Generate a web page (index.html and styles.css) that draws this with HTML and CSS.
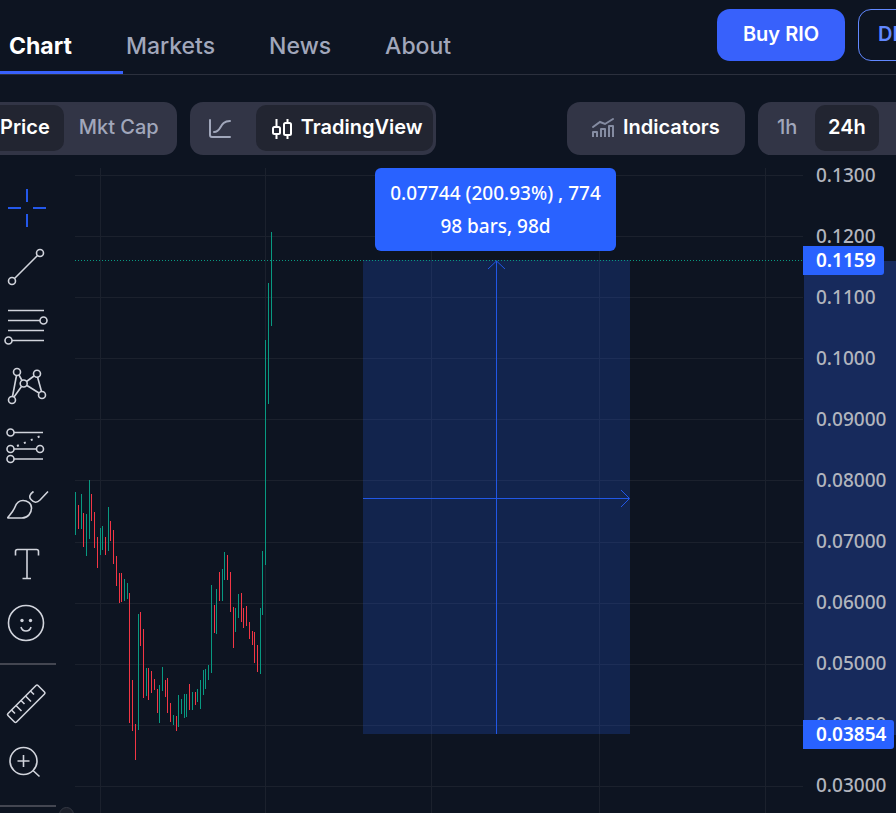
FILE: index.html
```html
<!DOCTYPE html>
<html lang="en">
  <head>
    <meta charset="UTF-8" />
    <meta name="viewport" content="width=device-width, initial-scale=1.0" />
    <title>RIO Price Chart</title>
    <link rel="stylesheet" href="styles.css">
  </head>
  <body>
    <header class="header">
      <nav class="tabs">
        <a class="tab active" href="#chart">Chart</a>
        <a class="tab" href="#markets">Markets</a>
        <a class="tab" href="#news">News</a>
        <a class="tab" href="#about">About</a>
      </nav>
      <div class="actions">
        <button class="btn btn-primary">Buy RIO</button>
        <button class="btn btn-outline">DEX</button>
      </div>
    </header>

    <!-- Chart options -->
    <div class="options">
      <div class="group group-start">
        <button class="option active">Price</button>
        <button class="option">Mkt Cap</button>
      </div>
      <div class="group group-view">
        <button class="option option-icon" aria-label="Line chart">
          <svg width="24" height="22" viewBox="0 0 24 22" fill="none" stroke="currentColor" stroke-width="2" stroke-linecap="round" stroke-linejoin="round">
            <path d="M2 2V17Q2 19 4 19H22M6 14C14 14 11 3 22 3" />
          </svg>
        </button>
        <button class="option option-view active">
          <svg width="22" height="22" viewBox="0 0 22 22" fill="none" stroke="currentColor" stroke-width="2">
            <rect x="2" y="9" width="7" height="7" rx="1.5" />
            <rect x="13" y="5" width="7" height="12" rx="1.5" />
            <path d="M5.500 1V9M5.500 16V21M16.500 1V5M16.500 17V21" />
          </svg>
          TradingView
        </button>
      </div>
      <button class="indicators">
        <svg width="24" height="22" viewBox="0 0 24 22" fill="none" stroke="currentColor" stroke-width="2">
          <path d="M2 20V15H6V20M10 20V12H14V20M18 20V9H22V20M6 20V17M14 20V17" stroke-linejoin="round" />
          <path d="M2 10L9 5L14 7L22 2" stroke-linecap="round" />
        </svg>
        Indicators
      </button>
      <div class="group group-range">
        <button class="option option-hour">1h</button>
        <button class="option option-day active">24h</button>
      </div>
    </div>

    <main class="chart">
      <!-- Drawing tools -->
      <div class="tools">
        <button class="tool selected" aria-label="Cross">
          <svg viewBox="0 0 56 59"><path d="M27 10V23M27 35V48M8 29H21M33 29H46" stroke-width="2" /></svg>
        </button>
        <button class="tool" aria-label="Trend line">
          <svg viewBox="0 0 56 59"><circle cx="40" cy="15" r="3.500" /><circle cx="12" cy="43" r="3.500" /><path d="M14.500 40.500L37.500 17.500" /></svg>
        </button>
        <button class="tool" aria-label="Fib retracement">
          <svg viewBox="0 0 56 59"><path d="M8 13.500H44M8 23.500H40M8 33.500H44M12 43.500H44" /><circle cx="43.500" cy="23.500" r="3.500" /><circle cx="8.500" cy="43.500" r="3.500" /></svg>
        </button>
        <button class="tool" aria-label="Patterns">
          <svg viewBox="0 0 56 59">
            <circle cx="17" cy="16" r="3.500" /><circle cx="37" cy="17.700" r="3.500" /><circle cx="23.700" cy="27.500" r="3.500" /><circle cx="12" cy="44" r="3.500" /><circle cx="42" cy="39" r="3.500" />
            <path d="M19 19L22 24.500M16.500 19.500L12.500 40.500M14 41L21.500 30.500M26.500 25.500L34 20M27 29.500L39 37M37.500 21L41.500 35.500" />
          </svg>
        </button>
        <button class="tool" aria-label="Forecast">
          <svg viewBox="0 0 56 59">
            <circle cx="10.500" cy="17.500" r="3.500" /><circle cx="10.500" cy="34" r="3.500" /><circle cx="40" cy="34" r="3.500" /><circle cx="10.500" cy="44" r="3.500" />
            <path d="M14 17.500H43M14 34H36.500M14 44H43" />
            <path d="M17 31L43 20" stroke-width="2" stroke-dasharray="2 5.500" />
          </svg>
        </button>
        <button class="tool" aria-label="Brush">
          <svg viewBox="0 0 56 59"><path d="M7.500 44H22C28 44 31.500 39 31.500 34C31.500 29 27 26.500 23 26.500C19 26.500 16.500 29 15 33C13.500 37 11 39.500 7.500 44ZM33.500 17.500C30 20 28.500 23 31 25.500C34 29 37 29 40 26L48 17.500" stroke-linejoin="bevel" /></svg>
        </button>
        <button class="tool" aria-label="Text">
          <svg viewBox="0 0 56 59"><path d="M15.500 22.500V18.500Q15.500 16.500 17.500 16.500H36.500Q38.500 16.500 38.500 18.500V22.500M27 16.500V45.500M22.500 45.500H31" /></svg>
        </button>
        <button class="tool" aria-label="Icons">
          <svg viewBox="0 0 56 59"><circle cx="26" cy="31" r="17.500" /><path d="M21 35Q22 39 26 39T31 35" /><circle class="dot" cx="22" cy="28.500" r="1.700" /><circle class="dot" cx="30.500" cy="28.500" r="1.700" /></svg>
        </button>
        <hr class="divider">
        <button class="tool" aria-label="Measure">
          <svg viewBox="0 0 56 59">
            <path d="M36 10.500Q37 9.500 38 10.500L44.500 17Q45.500 18 44.500 19L16.500 47Q15.500 48 14.500 47L8 40.500Q7 39.500 8 38.500Z" />
            <path d="M11.500 35L15 38.500M16 30.500L21.500 36M21 25.500L24.500 29M25.500 21L31 26.500M30.500 16L34 19.500" />
          </svg>
        </button>
        <button class="tool" aria-label="Zoom in">
          <svg viewBox="0 0 56 59"><circle cx="23.500" cy="27" r="13.500" /><path d="M33 36.500L39.500 42.500M23.500 21V33M17.500 27H29.500" /></svg>
        </button>
        <hr class="divider">
      </div>

      <!-- Candles and the measured range -->
      <div class="plot">
        <svg class="canvas" fill="none">
          <g class="grid">
            <line x1="0" x2="100%" y1="7.500" y2="7.500" />
            <line x1="0" x2="100%" y1="68.500" y2="68.500" />
            <line x1="0" x2="100%" y1="129.500" y2="129.500" />
            <line x1="0" x2="100%" y1="190.500" y2="190.500" />
            <line x1="0" x2="100%" y1="251.500" y2="251.500" />
            <line x1="0" x2="100%" y1="312.500" y2="312.500" />
            <line x1="0" x2="100%" y1="374.500" y2="374.500" />
            <line x1="0" x2="100%" y1="435.500" y2="435.500" />
            <line x1="0" x2="100%" y1="496.500" y2="496.500" />
            <line x1="0" x2="100%" y1="557.500" y2="557.500" />
            <line x1="0" x2="100%" y1="618.500" y2="618.500" />
            <line x1="25.500" x2="25.500" y1="0" y2="100%" />
            <line x1="190.500" x2="190.500" y1="0" y2="100%" />
            <line x1="356.500" x2="356.500" y1="0" y2="100%" />
            <line x1="524.500" x2="524.500" y1="0" y2="100%" />
            <line x1="690.500" x2="690.500" y1="0" y2="100%" />
          </g>
          <path class="up" d="M.5 324V367M6.500 326V361M11.500 346V388M14.500 312V371M25.500 360V387M27.500 358V382M33.500 339V383M49.500 411V433M52.500 415V431M63.500 446V562M71.500 500V528M84.500 517V555M87.500 499V523M98.500 547V557M103.500 527V559M106.500 531V546M109.500 526V550M111.500 526V549M117.500 524V542M122.500 521V534M125.500 512V541M128.500 502V527M130.500 501V521M133.500 497V512M136.500 417V505M141.500 421V466M147.500 401V433M149.500 384V412M160.500 440V464M163.500 426V450M185.500 440V506M187.500 383V447M190.500 172V397M193.500 115V236M196.500 64V158" />
          <path class="down" d="M3.500 337V361M8.500 345V379M16.500 326V353M19.500 344V380M22.500 369V400M30.500 369V387M35.500 353V373M38.500 362V396M41.500 388V418M44.500 405V435M46.500 405V434M54.500 425V555M57.500 512V563M60.500 556V592M65.500 444V478M68.500 461V530M73.500 500V532M76.500 503V525M79.500 511V522M82.500 521V545M90.500 512V529M92.500 510V545M95.500 535V554M101.500 548V563M114.500 516V542M120.500 524V537M139.500 437V465M144.500 404V433M152.500 387V412M155.500 404V444M158.500 439V480M166.500 425V454M168.500 440V460M171.500 438V458M174.500 454V471M177.500 463V477M179.500 464V495M182.500 477V504" />
          <rect class="range" x="288" y="92" width="267" height="474" />
          <path class="arrows" d="M421.500 566V93M413 101L421.500 93L430 101M288 330.500H554M546 322L554.500 330.500L546 339" />
          <line class="last-price" x1="0" x2="100%" y1="92.500" y2="92.500" />
        </svg>
        <div class="tooltip">0.07744 (200.93%) , 774<br>98 bars, 98d</div>
        <span class="handle"></span>
      </div>

      <div class="axis">
        <div class="axis-range"></div>
        <ul class="prices">
          <li>0.1300</li>
          <li>0.1200</li>
          <li>0.1100</li>
          <li>0.1000</li>
          <li>0.09000</li>
          <li>0.08000</li>
          <li>0.07000</li>
          <li>0.06000</li>
          <li>0.05000</li>
          <li>0.04000</li>
          <li>0.03000</li>
        </ul>
        <span class="price-tag tag-high">0.1159</span>
        <span class="price-tag tag-low">0.03854</span>
      </div>
    </main>
  </body>
</html>
```

FILE: styles.css
```css
/* Global Styles */
* {
  margin: 0;
  padding: 0;
  box-sizing: border-box;
}

body {
  font-family: "Inter", sans-serif;
  background: #0d1421;
  color: #fff;
  display: flex;
  flex-direction: column;
  min-height: 100vh;
  overflow: hidden;
}

button {
  font: inherit;
  color: inherit;
  background: none;
  border: none;
  cursor: pointer;
}

svg {
  flex-shrink: 0;
}

/* Header */
.header {
  display: flex;
  justify-content: space-between;
  height: 75px;
  border-bottom: 1px solid #2b303d;
}

.tabs {
  display: flex;
  gap: 3px;
}

.tab {
  padding: 32px 51px 0 0;
  font-size: 23px;
  line-height: 28px;
  font-weight: 500;
  color: #a1a7bb;
  text-decoration: none;
}

.tab.active {
  padding-left: 9px;
  font-weight: 700;
  color: #fff;
  border-bottom: 3px solid #3861fb;
}

.actions {
  display: flex;
  gap: 13px;
  padding-top: 9px;
  width: 179px;
  overflow: hidden;
}

.btn {
  flex-shrink: 0;
  width: 128px;
  height: 52px;
  padding-bottom: 2px;
  border-radius: 13px;
  font-size: 20px;
  font-weight: 600;
}

.btn-primary {
  background: #3861fb;
}

.btn-outline {
  padding-left: 19px;
  border: 1px solid #6188ff;
  color: #6188ff;
  text-align: left;
}

/* Chart options */
.options {
  display: flex;
  gap: 13px;
  padding-top: 27px;
  height: 93px;
  font-size: 20px;
}

.group,
.indicators {
  display: flex;
  height: 53px;
  background: #323546;
  border-radius: 13px;
}

.group {
  padding: 3px;
  color: #a1a7bb;
}

.option {
  display: flex;
  align-items: center;
  gap: 8px;
  height: 46px;
  padding: 0 15px 2px;
  border-radius: 10px;
  font-weight: 500;
}

.option.active {
  background: #222531;
  color: #fff;
  font-weight: 600;
}

.group-start {
  padding-left: 0;
  border-radius: 0 13px 13px 0;
}

.group-start .active {
  padding-left: 0;
  padding-right: 14px;
  border-radius: 0 10px 10px 0;
}

.option-icon {
  width: 63px;
  padding: 2px 15px 0;
  color: #a1a7bb;
}

.option-view {
  width: 177px;
  padding: 0 0 2px 15px;
}

.option-view svg {
  margin-top: 3px;
}

.indicators {
  align-items: center;
  gap: 8px;
  width: 178px;
  margin-left: auto;
  padding: 0 0 3px 24px;
  font-weight: 600;
}

.indicators svg {
  margin-top: 2px;
  color: #858ca2;
}

.group-range {
  width: 138px;
  border-radius: 13px 0 0 13px;
}

.option-hour {
  width: 54px;
  padding-left: 16px;
}

.option-day {
  width: 64px;
  padding: 0 13px 2px;
}

/* Chart */
.chart {
  flex: 1;
  display: flex;
  font-family: "Noto Sans", sans-serif;
  font-size: 19px;
}

.tools {
  width: 56px;
  margin-right: 19px;
  padding-top: 11px;
}

.tool {
  display: block;
  width: 100%;
  height: 59px;
}

.tool svg {
  display: block;
  width: 56px;
  height: 59px;
  fill: none;
  stroke: #d1d4dc;
  stroke-width: 1.6;
}

.tool .dot {
  fill: #d1d4dc;
  stroke: none;
}

.tool.selected svg {
  stroke: #2458ea;
}

.divider {
  height: 2px;
  margin: 12px 0 10px;
  border: none;
  background: #434651;
}

/* Plot area */
.plot {
  position: relative;
  flex: 1;
}

.canvas {
  position: absolute;
  width: 100%;
  height: 100%;
}

.grid {
  stroke: #1b212d;
}

.up {
  stroke: #089981;
}

.down {
  stroke: #f23645;
}

.range {
  fill: #2962ff;
  fill-opacity: 0.2;
}

.arrows {
  stroke: #2157e6;
}

.last-price {
  stroke: #089981;
  stroke-dasharray: 1 2;
}

.tooltip {
  position: absolute;
  top: 0;
  left: 300px;
  width: 241px;
  padding: 9px 0 8px;
  background: #2962ff;
  border-radius: 6px;
  line-height: 33px;
  font-weight: 500;
  text-align: center;
  white-space: nowrap;
}

.handle {
  position: absolute;
  left: -16px;
  bottom: -5px;
  width: 15px;
  height: 15px;
  background: #1c202b;
  border: 1px solid #343843;
  border-radius: 50%;
}

/* Price axis */
.axis {
  position: relative;
  width: 93px;
}

.axis-range {
  position: absolute;
  top: 93px;
  left: 1px;
  right: 0;
  height: 474px;
  background: #172a5c;
}

.prices {
  position: relative;
  margin-top: -23px;
  padding-left: 13px;
  list-style: none;
  font-weight: 500;
  color: #b2b5be;
}

.prices li {
  height: 61px;
  line-height: 61px;
}

.price-tag {
  position: absolute;
  left: 0;
  padding: 0 8px 0 13px;
  background: #2962ff;
  border-radius: 0 3px 3px 0;
  line-height: 29px;
  font-weight: 600;
}

.tag-high {
  top: 78px;
}

.tag-low {
  top: 552px;
}
```
